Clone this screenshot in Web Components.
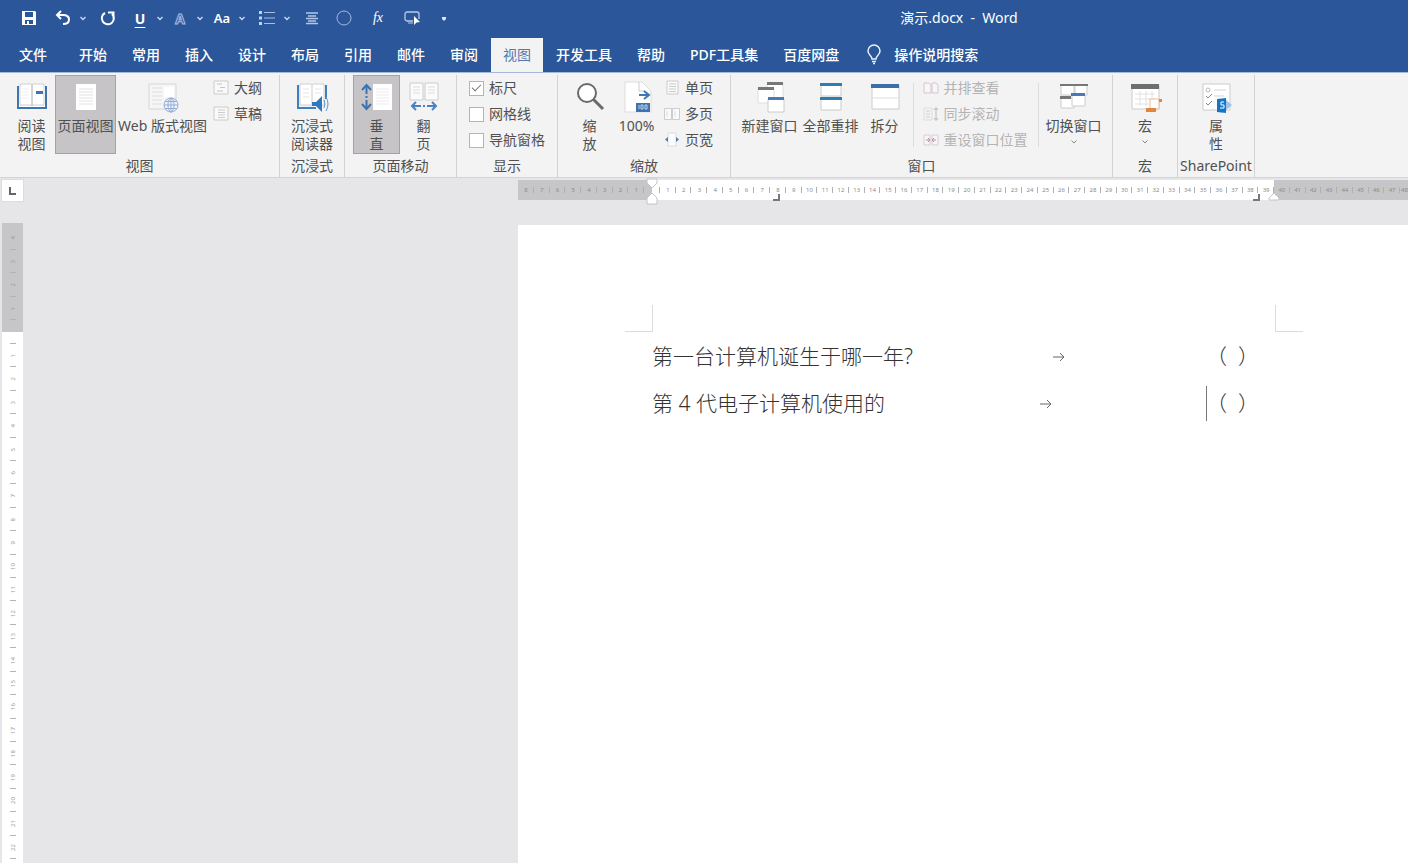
<!DOCTYPE html>
<html lang="zh-CN">
<head>
<meta charset="utf-8">
<title>演示.docx - Word</title>
<style>
html,body{margin:0;height:100%}
body{font-family:"Noto Sans","Noto Sans CJK SC",sans-serif;font-size:14px;color:#505050;background:#e6e6e8;overflow:hidden}
</style>
</head>
<body>
<word-window></word-window>
<script>
const ICONS = {
  save:[16,16,`<path fill="#fff" fill-rule="evenodd" d="M1 1h13l1 1v13H1zM4 2v5h8V2zM4 10v4h2v-3h2v3h4v-4z"/>`],
  undo:[16,16,`<path d="M6 1L2 5l4 4M2.500 5H8c4 0 6 2 6 4.500S12 14 8 14" fill="none" stroke="#fff" stroke-width="2"/>`],
  redo:[16,16,`<path d="M5 3a6 6 0 1 0 7 1M8 2.500h5.500V8" fill="none" stroke="#fff" stroke-width="2"/>`],
  chev:[8,8,`<path d="M1.500 3L4 5.500 6.500 3" fill="none" stroke="#c9d6ec" stroke-width="1.400"/>`],
  chevDark:[8,6,`<path d="M1.500 1.500L4 4l2.500-2.500" fill="none" stroke="#888"/>`],
  list:[16,16,`<path d="M5 2.500h11M5 8h11M5 13.500h11" stroke="#a9bfe2" stroke-width="1.200"/><path d="M0 1h3v3H0zM0 6.500h3v3H0zM0 12h3v3H0z" fill="#bcd3f3"/>`],
  center:[16,16,`<path d="M2 3h12M4 6h8M2 8.500h12M4 11h8M2 13.500h12" stroke="#b3c6e6" stroke-width="1.500"/>`],
  circle:[16,16,`<circle cx="8" cy="8" r="7" fill="none" stroke="#a3bae0"/>`],
  pointer:[18,16,`<path d="M10 11H4a2 2 0 0 1-2-2V4a2 2 0 0 1 2-2h10a2 2 0 0 1 2 2v5" fill="none" stroke="#b8cae8" stroke-width="1.300"/><path d="M11 6v9l2.500-2.500L17 12z" fill="#fff"/><path d="M5 13h5" stroke="#b8cae8"/>`],
  more:[8,8,`<path d="M2 3h4v2L4 7 2 5z" fill="#dce7f8"/>`],
  bulb:[16,20,`<path d="M6 14c0-3-4-4-4-8a6 6 0 0 1 12 0c0 4-4 5-4 8z" fill="none" stroke="#e8effa" stroke-width="1.500"/><path d="M6 16.500h4M7 18.500h2" stroke="#e8effa" stroke-width="1.400"/>`],
  read:[32,32,`<path d="M2 5v22h28V5" fill="#fff" stroke="#3f74ae" stroke-width="2"/><path d="M4 3h11l1 1 1-1h11v21H17l-1 1-1-1H4z" fill="#fff" stroke="#d0d0d0"/><path d="M16 4v21" stroke="#aaa"/><path d="M6 8h7M6 11h7M6 14h7M6 17h7" stroke="#eee"/><path d="M20 10h7v3h-7z" fill="#3f74ae"/>`],
  page:[32,32,`<path d="M6 3h20v26H6z" fill="#fff"/><path d="M9 8h14M9 11h14M9 14h14M9 17h14M9 20h14M9 23h14" stroke="#e2e2e4"/>`],
  web:[32,32,`<path d="M2 3h27v25H2z" fill="#f6f6f6" stroke="#d6d6d6"/><path d="M5 7h10M5 11h10M5 15h10M5 19h10M5 23h10" stroke="#ddd"/><path d="M17 6h10v10H17z" fill="#fff"/><circle cx="24" cy="24" r="7" fill="#eef3fb" stroke="#93add4"/><ellipse cx="24" cy="24" rx="3" ry="7" fill="none" stroke="#93add4"/><path d="M17 24h14M18 20.500h12M18 27.500h12M24 17v14" stroke="#93add4"/>`],
  outline:[16,16,`<path d="M1 1h14v13H1z" fill="#f9f9f9" stroke="#ccc"/><path d="M4 4h5M7 7.500h5M4 11h6" stroke="#c4c4c4"/>`],
  draft:[16,16,`<path d="M1 1h14v13H1z" fill="#f9f9f9" stroke="#ccc"/><path d="M5 4h7M5 6.500h7M5 9h7M5 11.500h7" stroke="#ccc"/>`],
  immersive:[32,32,`<path d="M2 4v23h18M30 4v14" fill="none" stroke="#3f7fc0" stroke-width="2"/><path d="M4 3h11l1 1 1-1h11v21H17l-1 1-1-1H4z" fill="#fff" stroke="#d0d0d0"/><path d="M16 4v21" stroke="#ccc"/><path d="M7 8h6M7 12h6M7 16h6M19 8h6M19 12h6" stroke="#e5e5e5"/><path d="M16 21h4l6-6v16l-6-6h-4z" fill="#2f78bd"/><path d="M28 19q2 4 0 8M30 16q4 7 0 14" fill="none" stroke="#5a94ce"/>`],
  vertical:[32,32,`<path d="M12 3h19v26H12z" fill="#fff"/><path d="M15 8h13M15 11h13M15 14h13M15 17h13M15 20h13M15 23h13" stroke="#ececee"/><path d="M5.500 5v22" stroke="#3c72b0" stroke-width="2" stroke-dasharray="8 2 2 2 8"/><path d="M1 9l4.500-5L10 9M1 23l4.500 5L10 23" fill="none" stroke="#3c72b0" stroke-width="2"/>`],
  flip:[32,32,`<path d="M2 2h13v17H2zM17 2h13v17H17z" fill="#fbfbfb" stroke="#ccc"/><path d="M5 6h7M5 9h7M5 12h7M20 6h7M20 9h7M20 12h7" stroke="#ddd"/><path d="M5 25h8M15 25h2M19 25h8" stroke="#4c80bf" stroke-width="2"/><path d="M8 21l-4 4 4 4M24 21l4 4-4 4" fill="none" stroke="#4c80bf" stroke-width="2"/>`],
  zoom:[32,32,`<circle cx="13" cy="12" r="9" fill="#fff" stroke="#6a6a6a" stroke-width="2"/><path d="M19 18l10 10" stroke="#6a6a6a" stroke-width="3"/>`],
  hundred:[32,32,`<path d="M4 1h17l9 9v21H4z" fill="#fff" stroke="#ddd"/><path d="M18 1v9h6" fill="none" stroke="#ccc"/><path d="M18 14h9M23 10l5 4-5 4" fill="none" stroke="#3c78b4" stroke-width="2"/><path d="M15 22h14v9H15z" fill="#3f73ae"/><path d="M18 24v4M20 24h2v4h-2zM24 24h2v4h-2z" stroke="#bcd2ea" fill="none"/>`],
  one:[16,16,`<path d="M3 1h11v13H3z" fill="#fafafa" stroke="#ccc"/><path d="M5 4h7M5 6.500h7M5 9h7M5 11.500h7" stroke="#ccc"/>`],
  many:[16,16,`<path d="M.5 2.500h7v11h-7zM8.500 2.500h7v11h-7z" fill="#fafafa" stroke="#ccc"/><path d="M3 5v6M11 5v6" stroke="#ddd"/>`],
  wide:[16,16,`<path d="M4 1h8v13H4z" fill="#fcfcfc" stroke="#ddd"/><path d="M4 5v5L1 7.500zM12 5v5l3-2.500z" fill="#4f7db8"/>`],
  newwin:[32,32,`<path d="M13 3h16v16H13z" fill="#fff" stroke="#ddd"/><path d="M13 1h16v3H13z" fill="#777"/><path d="M4 8h16v14H4z" fill="#fff" stroke="#ddd"/><path d="M4 6h16v3H4z" fill="#777"/><path d="M14 18h16v13H14z" fill="#fff" stroke="#ccc"/><path d="M14 16h16v3H14z" fill="#4a7ab6"/>`],
  arrange:[32,32,`<path d="M6 3h20v12H6zM6 17h20v12H6z" fill="#fff" stroke="#ccc"/><path d="M5 2h22v3H5zM5 16h22v3H5z" fill="#2c7eb0"/>`],
  split:[32,32,`<path d="M3 4h27v24H3z" fill="#fff" stroke="#ccc"/><path d="M2 3h28v4H2z" fill="#3a6fa8"/><path d="M3 17h27" stroke="#ddd"/>`],
  side:[16,16,`<path d="M1 3h5l2 2v8H1zM9 3h4l2 2v8H9z" fill="#f8f4f7" stroke="#d3c6d0"/>`],
  sync:[16,16,`<path d="M1 2h8v12H1z" fill="#f2f2f2" stroke="#ddd"/><path d="M3 5h4M3 8h4M3 11h4" stroke="#d0d0d0"/><path d="M13 2v12M11 4l2-2.500L15 4M11 12l2 2.500 2-2.500" fill="none" stroke="#b8b8b8"/>`],
  reset:[16,16,`<path d="M1 3h6v10H1zM9 3h6v10H9z" fill="#f8f4f7" stroke="#d8cdd5"/><path d="M3 8h4M9 8h4M5 6l2 2-2 2M11 6L9 8l2 2" fill="none" stroke="#bb8ea6"/>`],
  switchwin:[32,32,`<path d="M3 4h13v10H3zM17 4h12v10H17zM3 17h13v10H3z" fill="#fff" stroke="#ccc"/><path d="M2 3h28v2H2zM2 15h11v3H2z" fill="#777"/><path d="M14 14h13v11H14z" fill="#fff" stroke="#ccc"/><path d="M13 12h14v3H13z" fill="#4a7ab6"/>`],
  macro:[32,32,`<path d="M3 4h27v24H3z" fill="#fff" stroke="#ccc"/><path d="M2 3h28v5H2z" fill="#6e6e6e"/><path d="M6 13h20M6 18h20M6 23h14M11 10v15M17 10v15M23 10v10" stroke="#e2e2e2"/><path d="M21 18h9v10h-9z" fill="#fff" stroke="#f0bd94"/><path d="M17 27h10v4H17zM30 18h3v3h-3z" fill="#e0873c"/>`],
  share:[32,32,`<path d="M3 3h27v26H3z" fill="#fff" stroke="#ccc"/><circle cx="8" cy="9" r="2" fill="none" stroke="#bbb"/><path d="M6 15l2 2 4-4M6 22l2 2 4-4" fill="none" stroke="#888"/><path d="M14 9h12M14 15h10" stroke="#d5d5d5"/><path d="M25 18l7 6-7 6z" fill="#9fc3ea"/><path d="M17 18l9-1v15l-9-1z" fill="#1476c4"/><path d="M24 21h-3v3h3v3h-4" fill="none" stroke="#fff"/>`],
  tabstop:[16,16,`<path d="M5 4v7h6" fill="none" stroke="#666" stroke-width="2"/>`],
  arrow:[14,12,`<path d="M1 6h11M8 2l4 4-4 4" fill="none" stroke="#666"/>`]
};

function define(name, markup, setup) {
  const tpl = document.createElement('template');
  tpl.innerHTML = markup;
  customElements.define(name, class extends HTMLElement {
    connectedCallback() {
      if (this.shadowRoot) return;
      const root = this.attachShadow({mode: 'open'});
      root.append(tpl.content.cloneNode(true));
      if (setup) setup(this, root);
    }
  });
}
const BTN = `button{appearance:none;border:0;background:none;padding:0;margin:0;font:inherit;color:inherit;cursor:default}`;

define('ui-icon', `<style>:host{display:inline-flex;flex:none}svg{display:block;overflow:visible}</style>`, (el, root) => {
  const [w, h, body] = ICONS[el.getAttribute('name')];
  root.innerHTML += `<svg width="${w}" height="${h}" viewBox="0 0 ${w} ${h}" aria-hidden="true">${body}</svg>`;
});

define('quick-item', `<style>${BTN}
:host{display:flex;align-items:center;gap:2px;height:36px;color:#fff}
.main{width:22px;height:24px;display:flex;align-items:center;justify-content:center}
.drop{width:14px;height:24px;display:flex;align-items:center;justify-content:center}
</style><button class="main"><slot></slot></button>`, (el, root) => {
  root.querySelector('.main').setAttribute('aria-label', el.getAttribute('label'));
  if (el.hasAttribute('split')) root.querySelector('.main').insertAdjacentHTML('afterend', `<button class="drop" aria-label="更多"><ui-icon name="chev"></ui-icon></button>`);
});

define('title-bar', `<style>
:host{display:flex;align-items:flex-start;height:38px;background:#2b579a;color:#fff}
nav{display:flex;flex:none;box-sizing:border-box;padding-left:18px;width:510px}
h1{flex:1;margin:0;font-size:14px;font-weight:400;line-height:36px;white-space:pre;text-align:center}
.u{font-weight:700;font-size:14px;text-decoration:underline;text-underline-offset:3px}
.a{font-weight:700;font-size:14px;color:#2b579a;-webkit-text-stroke:1px #a9bfe2}
.aa{font-weight:600;font-size:13px}
.fx{font-family:"Liberation Serif",serif;font-style:italic;font-size:14px}
.w32{width:32px}.w34{width:34px}.w40{width:40px}.w42{width:42px}.w45{width:45px}
</style>
<nav aria-label="快速访问工具栏">
<quick-item class="w34" label="保存"><ui-icon name="save"></ui-icon></quick-item>
<quick-item class="w45" label="撤消" split><ui-icon name="undo"></ui-icon></quick-item>
<quick-item class="w32" label="重复"><ui-icon name="redo"></ui-icon></quick-item>
<quick-item class="w40" label="下划线" split><span class="u">U</span></quick-item>
<quick-item class="w42" label="文本效果" split><span class="a">A</span></quick-item>
<quick-item class="w45" label="更改大小写" split><span class="aa">Aa</span></quick-item>
<quick-item class="w45" label="项目符号" split><ui-icon name="list"></ui-icon></quick-item>
<quick-item class="w32" label="居中"><ui-icon name="center"></ui-icon></quick-item>
<quick-item class="w34" label="椭圆"><ui-icon name="circle"></ui-icon></quick-item>
<quick-item class="w34" label="公式"><span class="fx">fx</span></quick-item>
<quick-item class="w32" label="选择对象"><ui-icon name="pointer"></ui-icon></quick-item>
<quick-item class="w32" label="自定义"><ui-icon name="more"></ui-icon></quick-item>
</nav>
<h1>演示.docx  -  Word</h1>`);

define('ribbon-tab', `<style>${BTN}
:host{display:block}
button{height:34px;padding:0 12px;line-height:34px;color:#fff;font-weight:500;white-space:nowrap;display:flex;align-items:center;gap:12px}
:host([file]) button{padding:0 19px}
:host([selected]) button{background:#f3f3f3;color:#5677ae;font-weight:400}
</style><button><slot></slot></button>`, (el, root) => {
  const b = root.querySelector('button');
  if (!el.hasAttribute('tell')) { b.setAttribute('role', 'tab'); b.setAttribute('aria-selected', el.hasAttribute('selected')); }
});

define('ribbon-tabs', `<style>
:host{display:flex;background:#2b579a;height:34px}
div{display:flex;gap:1px}
ribbon-tab[tell]{margin-left:3px}
</style><div role="tablist">
<ribbon-tab file>文件</ribbon-tab><ribbon-tab>开始</ribbon-tab><ribbon-tab>常用</ribbon-tab><ribbon-tab>插入</ribbon-tab><ribbon-tab>设计</ribbon-tab><ribbon-tab>布局</ribbon-tab><ribbon-tab>引用</ribbon-tab><ribbon-tab>邮件</ribbon-tab><ribbon-tab>审阅</ribbon-tab><ribbon-tab selected>视图</ribbon-tab><ribbon-tab>开发工具</ribbon-tab><ribbon-tab>帮助</ribbon-tab><ribbon-tab>PDF工具集</ribbon-tab><ribbon-tab>百度网盘</ribbon-tab></div>
<ribbon-tab tell><ui-icon name="bulb"></ui-icon>操作说明搜索</ribbon-tab>`);

define('big-button', `<style>${BTN}
:host{display:block;flex:none;width:47px}
:host([wide]){width:61px}
:host([widest]){width:93px}
button{box-sizing:border-box;width:100%;height:79px;border:1px solid transparent;padding-top:5px;display:flex;flex-direction:column;align-items:center;line-height:18px;white-space:nowrap}
:host([pressed]) button{background:#c6c4c6;border-color:#a3a1a3}
span{margin-top:4px;text-align:center}
.chev{margin-top:4px}
</style><button><span><slot></slot></span></button>`, (el, root) => {
  const b = root.querySelector('button');
  b.insertAdjacentHTML('afterbegin', `<ui-icon name="${el.getAttribute('icon')}"></ui-icon>`);
  if (el.hasAttribute('pressed')) b.setAttribute('aria-pressed', 'true');
  if (el.hasAttribute('menu')) b.insertAdjacentHTML('beforeend', '<ui-icon class="chev" name="chevDark"></ui-icon>');
});

define('small-button', `<style>${BTN}
:host{display:block}
button{display:flex;align-items:center;gap:5px;height:26px;white-space:nowrap;line-height:26px}
button:disabled{color:#b4b4b4}
</style><button><slot></slot></button>`, (el, root) => {
  const b = root.querySelector('button');
  b.insertAdjacentHTML('afterbegin', `<ui-icon name="${el.getAttribute('icon')}"></ui-icon>`);
  b.disabled = el.hasAttribute('disabled');
});

define('check-item', `<style>
:host{display:block}
label{display:flex;align-items:center;gap:5px;height:26px;line-height:26px;white-space:nowrap}
input{appearance:none;box-sizing:border-box;width:15px;height:15px;margin:0;border:1px solid #b4b4b4;background:#fff;display:grid;place-items:center}
input:checked::before{content:"";width:8px;height:4px;border:solid #777;border-width:0 0 1px 1px;transform:rotate(-45deg);margin-bottom:3px}
</style><label><input type="checkbox"><slot></slot></label>`, (el, root) => {
  root.querySelector('input').checked = el.hasAttribute('checked');
});

define('ribbon-group', `<style>
:host{display:flex;flex-direction:column;flex:none;box-sizing:border-box;height:102px;margin-top:3px;border-right:1px solid #d2d2d2}
.row{display:flex;height:82px;padding:0 8px}
:host([center]) .row{justify-content:center;padding:0}
.name{text-align:center;line-height:18px;white-space:nowrap}
</style><div class="row"><slot></slot></div><div class="name"></div>`, (el, root) => {
  root.querySelector('.name').textContent = el.getAttribute('name');
  root.host.setAttribute('role', 'group');
});

define('ribbon-bar', `<style>
:host{display:flex;box-sizing:border-box;height:106px;background:#f3f3f3;border-bottom:1px solid #d4d4d4;box-shadow:inset 0 1px #a4b8dc}
.col{display:flex;flex-direction:column;padding:0 4px}
.rule{width:1px;height:64px;margin-top:8px;background:#dcdcdc}
.g1{width:280px}.narrow{width:65px}.g3{width:112px}.g4{width:101px}.g5{width:173px}.g6{width:382px}.g8{width:77px}
.gap{padding:0 10px 0 9px}
.switch,.first{margin-left:5px}
</style>
<ribbon-group class="g1" name="视图">
<big-button icon="read">阅读<br>视图</big-button><big-button wide pressed icon="page">页面视图</big-button><big-button widest icon="web">Web 版式视图</big-button>
<div class="col"><small-button icon="outline">大纲</small-button><small-button icon="draft">草稿</small-button></div>
</ribbon-group>
<ribbon-group class="narrow" center name="沉浸式"><big-button wide icon="immersive">沉浸式<br>阅读器</big-button></ribbon-group>
<ribbon-group class="g3" name="页面移动"><big-button pressed icon="vertical">垂<br>直</big-button><big-button icon="flip">翻<br>页</big-button></ribbon-group>
<ribbon-group class="g4" name="显示"><div class="col"><check-item checked>标尺</check-item><check-item>网格线</check-item><check-item>导航窗格</check-item></div></ribbon-group>
<ribbon-group class="g5" name="缩放"><big-button icon="zoom">缩<br>放</big-button><big-button icon="hundred">100%</big-button>
<div class="col"><small-button icon="one">单页</small-button><small-button icon="many">多页</small-button><small-button icon="wide">页宽</small-button></div></ribbon-group>
<ribbon-group class="g6" name="窗口"><big-button wide icon="newwin">新建窗口</big-button><big-button wide icon="arrange">全部重排</big-button><big-button icon="split">拆分</big-button>
<div class="rule first"></div><div class="col gap"><small-button disabled icon="side">并排查看</small-button><small-button disabled icon="sync">同步滚动</small-button><small-button disabled icon="reset">重设窗口位置</small-button></div><div class="rule"></div>
<big-button class="switch" wide menu icon="switchwin">切换窗口</big-button></ribbon-group>
<ribbon-group class="narrow" center name="宏"><big-button menu icon="macro">宏</big-button></ribbon-group>
<ribbon-group class="g8" center name="SharePoint"><big-button icon="share">属<br>性</big-button></ribbon-group>`);

const cells = list => list.map(n => `<i>${n}</i>`).join('');
const span = (a, b) => Array.from({length: Math.abs(b - a) + 1}, (_, k) => a < b ? a + k : a - k);

define('h-ruler', `<style>
:host{position:relative;display:flex;height:20px;margin-top:2px;font-size:6px;line-height:20px;color:#8c8c8c;min-width:0}
.run{flex:none;display:grid;grid-auto-flow:column;grid-auto-columns:1fr}
.run.left{width:126px;background:#c6c5c7}
.zero{flex:none;width:16px;background:linear-gradient(90deg,#c6c5c7 50%,#fff 50%)}
.body{width:614px;background:#fff}
.right{width:126px;background:#c6c5c7}
.tail{flex:1;background:#c6c5c7;overflow:hidden;white-space:nowrap;padding-left:1px;min-width:0}
i,.zero{position:relative;font-style:normal;text-align:center}
i::after,.zero::after{content:"";position:absolute;right:0;top:7px;width:1px;height:6px;background:#b0b0b0}
svg{position:absolute;overflow:visible;top:0}
.indent{left:128px}.end{left:750px}.t1{left:255px}.t2{left:735px}
</style><div class="run left"></div><div class="zero"></div><div class="run body"></div><div class="run right"></div><div class="tail">48</div>
<svg class="indent" width="12" height="24"><path d="M1-1h10v4L6 8 1 3zM6 13l5 5v6H1v-6z" fill="#fff" stroke="#c4c4c4"/></svg>
<svg class="t1" width="8" height="22"><path d="M0 20h6v-6" fill="none" stroke="#777" stroke-width="2"/></svg>
<svg class="t2" width="8" height="22"><path d="M0 20h6v-6" fill="none" stroke="#777" stroke-width="2"/></svg>
<svg class="end" width="12" height="22"><path d="M6 13l5 5v2H1v-2z" fill="#fff" stroke="#c4c4c4"/></svg>`, (el, root) => {
  root.querySelector('.left').innerHTML = cells(span(8, 1));
  root.querySelector('.body').innerHTML = cells(span(1, 39));
  root.querySelector('.right').innerHTML = cells(span(40, 47));
});

define('v-ruler', `<style>
:host{display:block;box-sizing:border-box;width:21px;margin:20px 0 0 2px;background:#fff;overflow:hidden;font-size:6px;line-height:6px;color:#9a9a9a;min-height:0}
.run{display:grid;grid-auto-rows:1fr}
.top{height:94px;padding-top:3px;background:#c6c5c7}
.zero{height:24px;background:linear-gradient(#c6c5c7 50%,#fff 50%)}
.body{height:515px}
i{font-style:normal;display:flex;align-items:center;justify-content:center}
b{font-weight:400;writing-mode:vertical-rl;writing-mode:sideways-lr}
i,.zero{position:relative}
i::after,.zero::after{content:"";position:absolute;left:8px;bottom:0;width:6px;height:1px;background:#b4b4b4}
</style><div class="run top"></div><div class="zero"></div><div class="run body"></div>`, (el, root) => {
  const v = list => list.map(n => `<i><b>${n}</b></i>`).join('');
  root.querySelector('.top').innerHTML = v(span(4, 1));
  root.querySelector('.body').innerHTML = v(span(1, 22));
});

define('doc-line', `<style>
:host{display:flex;width:607px;height:47px;line-height:47px;white-space:pre}
.tab{flex:1;display:flex;align-items:center;justify-content:center}
.end{position:relative}
:host([caret]) .end::before{content:"";position:absolute;left:0;top:6px;height:35px;width:1px;background:#777}
</style><span><slot></slot></span><span class="tab"><ui-icon name="arrow"></ui-icon></span><span class="end"><slot name="end"></slot></span>`);

define('doc-page', `<style>
:host{display:block;background:#fff;margin-top:22px;min-width:0;overflow:hidden}
.marks{display:flex;align-items:flex-end;height:107px;padding-left:107px}
.marks i{flex:none;box-sizing:border-box;width:28px;height:27px;border:0 solid #dcdcdc;border-bottom-width:1px}
.marks .l{border-right-width:1px}.marks .r{border-left-width:1px;margin-left:622px}
main{padding:1px 0 0 134px;font-weight:300;font-size:21px;color:#333}
</style><div class="marks"><i class="l"></i><i class="r"></i></div>
<main><doc-line>第一台计算机诞生于哪一年?<span slot="end">（  ）</span></doc-line><doc-line caret>第 4 代电子计算机使用的<span slot="end">（  ）</span></doc-line></main>`);

define('word-window', `<style>${BTN}
:host{display:flex;flex-direction:column;height:100vh}
.work{flex:1;min-height:0;display:grid;grid-template:25px minmax(0,1fr)/518px minmax(0,1fr);overflow:hidden}
.stop{width:23px;height:23px;margin:1px 0 0 1px;background:#fff;border:1px solid #dcdcdc;display:grid;place-items:center}
</style>
<title-bar></title-bar><ribbon-tabs></ribbon-tabs><ribbon-bar></ribbon-bar>
<div class="work"><button class="stop" aria-label="制表符"><ui-icon name="tabstop"></ui-icon></button><h-ruler></h-ruler><v-ruler></v-ruler><doc-page></doc-page></div>`);
</script>
</body>
</html>
